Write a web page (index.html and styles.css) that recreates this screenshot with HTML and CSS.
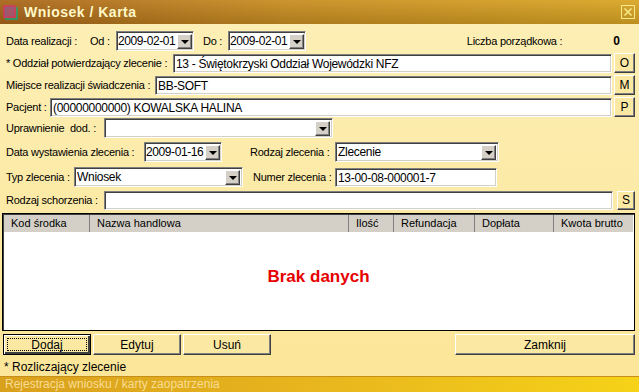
FILE: index.html
```html
<!DOCTYPE html>
<html lang="pl">
<head>
    <meta charset="UTF-8">
    <title>Wniosek / Karta</title>
    <link rel="stylesheet" href="styles.css">
</head>
<body>
    <div class="window">
        <div class="titlebar">
            <svg class="app-icon" width="15" height="15" viewBox="0 0 15 15">
                <rect x="3" y="3" width="11" height="11" fill="none" stroke="#1fa37a" stroke-width="1.5"/>
                <rect x="1" y="1" width="11" height="11" fill="#a8507a" fill-opacity="0.8" stroke="#e0306a" stroke-width="1.2"/>
            </svg>
            <span class="title">Wniosek / Karta</span>
            <span class="close">
                <svg width="14" height="14" viewBox="0 0 14 14">
                    <rect x="0.5" y="0.5" width="13" height="13" fill="none" stroke="#f8e88a"/>
                    <path d="M3.5 3.5 L10.5 10.5 M10.5 3.5 L3.5 10.5" stroke="#f8e88a" stroke-width="1.6"/>
                </svg>
            </span>
        </div>

        <div class="form">
            <div class="row r1">
                <span class="lbl w-data">Data realizacji :</span>
                <span class="lbl w-od">Od :</span>
                <div class="combo date"><span class="val">2009-02-01</span><span class="arrow"></span></div>
                <span class="lbl w-do">Do :</span>
                <div class="combo date"><span class="val">2009-02-01</span><span class="arrow"></span></div>
                <span class="lbl lp">Liczba porządkowa :</span>
                <b class="lp-val">0</b>
            </div>

            <div class="row btn-row">
                <span class="lbl w-oddzial">* Oddział potwierdzający zlecenie :</span>
                <div class="field grow">13 - Świętokrzyski Oddział Wojewódzki NFZ</div>
                <button class="small">O</button>
            </div>
            <div class="row btn-row">
                <span class="lbl w-miejsce">Miejsce realizacji świadczenia :</span>
                <div class="field grow">BB-SOFT</div>
                <button class="small">M</button>
            </div>
            <div class="row btn-row">
                <span class="lbl w-pacjent">Pacjent :</span>
                <div class="field grow">(00000000000) KOWALSKA HALINA</div>
                <button class="small">P</button>
            </div>

            <div class="row r5">
                <span class="lbl w-upr">Uprawnienie&nbsp; dod. :</span>
                <div class="combo upr"><span class="val"></span><span class="arrow"></span></div>
            </div>

            <div class="row r6">
                <span class="lbl w-wyst">Data wystawienia zlecenia :</span>
                <div class="combo date"><span class="val">2009-01-16</span><span class="arrow"></span></div>
                <span class="lbl w-rodzaj">Rodzaj zlecenia :</span>
                <div class="combo rodzaj"><span class="val">Zlecenie</span><span class="arrow"></span></div>
            </div>

            <div class="row r7">
                <span class="lbl w-typ">Typ zlecenia :</span>
                <div class="combo typ"><span class="val">Wniosek</span><span class="arrow"></span></div>
                <span class="lbl w-numer">Numer zlecenia :</span>
                <div class="field numer">13-00-08-000001-7</div>
            </div>

            <div class="row r8">
                <span class="lbl w-schorz">Rodzaj schorzenia :</span>
                <div class="field grow"></div>
                <button class="small s-btn">S</button>
            </div>
        </div>

        <div class="grid">
            <div class="grid-head">
                <span class="col c-kod">Kod środka</span>
                <span class="col c-nazwa">Nazwa handlowa</span>
                <span class="col c-ilosc">Ilość</span>
                <span class="col c-ref">Refundacja</span>
                <span class="col c-dop">Dopłata</span>
                <span class="col c-kwota">Kwota brutto</span>
            </div>
            <div class="grid-body">Brak danych</div>
        </div>

        <div class="actions">
            <button class="act default"><span class="focus">Dodaj</span></button>
            <button class="act">Edytuj</button>
            <button class="act">Usuń</button>
            <button class="act zamknij">Zamknij</button>
        </div>

        <div class="note">* Rozliczający zlecenie</div>

        <div class="status">Rejestracja wniosku / karty zaopatrzenia</div>
    </div>
</body>
</html>
```

FILE: styles.css
```css
* {
    box-sizing: border-box;
}

body {
    margin: 0;
    font-family: "Liberation Sans", Arial, sans-serif;
    font-size: 11px;
    color: #000;
}

.window {
    width: 639px;
    height: 392px;
    display: flex;
    flex-direction: column;
    background: linear-gradient(to bottom, #fdefb6, #fbe597);
    overflow: hidden;
}

/* Pasek tytułu */
.titlebar {
    height: 24px;
    display: flex;
    align-items: center;
    padding-left: 3px;
    background:
        linear-gradient(to bottom, rgba(255, 255, 255, 0.06), rgba(0, 0, 0, 0.14)),
        linear-gradient(to right, #a9661a, #c98e22 45%, #daa624);
}

.app-icon {
    display: block;
}

.title {
    margin-left: 6px;
    font-size: 14px;
    font-weight: bold;
    letter-spacing: 0.5px;
    color: #fff9c8;
}

.close {
    margin-left: auto;
    margin-right: 4px;
    display: flex;
}

/* Formularz */
.form {
    padding-top: 6px;
}

.row {
    display: flex;
    align-items: center;
    height: 22px;
    padding-left: 6px;
    white-space: nowrap;
}

.lbl {
    flex: none;
    letter-spacing: -0.25px;
}

.w-data { width: 84px; }
.w-od { width: 26px; }
.w-do { width: 25px; margin-left: 9px; }
.w-oddzial { width: 167px; }
.w-miejsce { width: 149px; }
.w-pacjent { width: 44px; }
.w-upr { width: 98px; }
.w-wyst { width: 138px; }
.w-rodzaj { width: 85px; margin-left: 28px; }
.w-typ { width: 68px; }
.w-numer { width: 82px; margin-left: 10px; }
.w-schorz { width: 98px; }

.lp {
    margin-left: auto;
}

.lp-val {
    margin-left: 51px;
    margin-right: 19px;
    font-size: 12px;
}

.btn-row {
    padding-right: 4px;
}

.r5 { margin-top: -1px; }
.r6 { margin-top: 2px; }
.r7 { margin-top: 3px; }
.r8 { margin-top: 1px; padding-right: 4px; }

/* Pola wejściowe */
.field, .combo {
    height: 19px;
    font-size: 12px;
    letter-spacing: -0.3px;
    background: #fff;
    border: 1px solid;
    border-color: #808080 #fff #fff #808080;
    box-shadow: inset 1px 1px #404040, inset -1px -1px #d4d0c8;
    padding: 2px 0 0 2px;
    line-height: 14px;
    overflow: hidden;
}

.grow {
    flex: 1;
}

.combo {
    display: flex;
    align-items: flex-start;
    padding: 2px 2px 0 2px;
    height: 20px;
}

.combo .val {
    flex: 1;
    overflow: hidden;
}

.arrow {
    flex: none;
    width: 15px;
    height: 15px;
    margin-left: 1px;
    background: #d4d0c8;
    border: 1px solid;
    border-color: #fff #404040 #404040 #fff;
    box-shadow: inset -1px -1px #808080;
    position: relative;
}

.arrow::after {
    content: "";
    position: absolute;
    left: 3px;
    top: 5px;
    border-left: 4px solid transparent;
    border-right: 4px solid transparent;
    border-top: 4px solid #000;
}

.date {
    width: 78px;
    padding-left: 1px;
    padding-right: 1px;
    letter-spacing: -0.4px;
}

.date .arrow {
    margin-left: 0;
}

.upr { width: 229px; }
.rodzaj { width: 164px; }
.typ { width: 169px; }
.numer { width: 162px; }

/* Przyciski */
button {
    font-family: inherit;
    font-size: 11px;
    color: #000;
    background: #fbe9a3;
    border: 1px solid;
    border-color: #fff #404040 #404040 #fff;
    box-shadow: inset -1px -1px #808080;
    padding: 0;
    cursor: pointer;
}

.small {
    flex: none;
    width: 21px;
    height: 20px;
    margin-left: 2px;
    font-size: 12px;
}

.s-btn {
    width: 18px;
    height: 19px;
    margin-left: 4px;
}

/* Tabela */
.grid {
    margin: 2px 4px 0 2px;
    height: 118px;
    background: #fff;
    border: 1px solid #000;
    box-shadow: inset 1px 1px #404040;
    display: flex;
    flex-direction: column;
}

.grid-head {
    display: flex;
    height: 17px;
    margin: 1px 1px 0 1px;
    background: #d4d0c8;
    white-space: nowrap;
}

.col {
    padding: 2px 0 0 7px;
    border-right: 1px solid #808080;
}

.c-kod { width: 86px; }
.c-nazwa { width: 259px; }
.c-ilosc { width: 45px; }
.c-ref { width: 81px; }
.c-dop { width: 79px; }
.c-kwota { flex: 1; border-right: none; }

.grid-body {
    flex: 1;
    display: flex;
    align-items: center;
    justify-content: center;
    padding-bottom: 8px;
    color: #e60000;
    font-size: 17px;
    font-weight: bold;
}

/* Dolne przyciski */
.actions {
    display: flex;
    margin-top: 3px;
    padding: 0 4px 0 3px;
}

.act {
    width: 88px;
    height: 21px;
    margin-right: 2px;
    font-size: 12px;
}

.default {
    border: 1px solid #000;
    box-shadow: inset 1px 1px #fff, inset -2px -2px #404040;
    padding: 3px;
}

.focus {
    display: block;
    height: 100%;
    line-height: 13px;
    border: 1px dotted #000;
}

.zamknij {
    width: 180px;
    margin-left: auto;
    margin-right: 0;
}

.note {
    margin-top: 5px;
    padding-left: 4px;
    font-size: 12px;
}

.status {
    margin-top: auto;
    height: 16px;
    padding: 1px 0 0 5px;
    font-size: 12px;
    color: #f7dc95;
    background: linear-gradient(to right, #d9a01c, #e8b61e 50%, #f6d218);
    box-shadow: inset 0 1px #c78e1a;
}
```
